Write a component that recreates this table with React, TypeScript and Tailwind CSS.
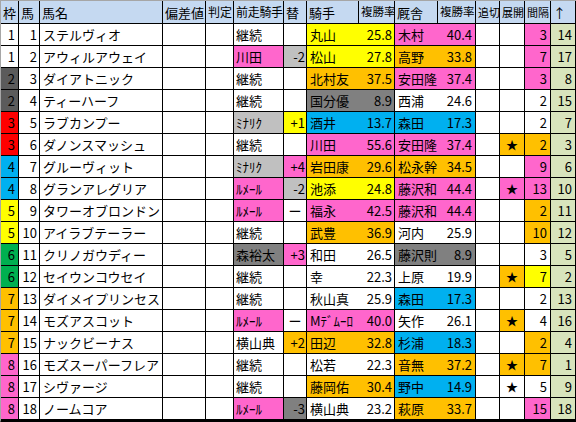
import React from "react";

const COLS =
  "grid grid-cols-[18px_21px_123px_43px_28px_50px_23px_52px_36px_43px_38px_24px_25px_26px_25px]";

const BG: Record<string, string> = {
  w: "bg-white",
  p: "bg-[#ff66cc]",
  o: "bg-[#ffc000]",
  y: "bg-[#ffff00]",
  b: "bg-[#00b0f0]",
  g: "bg-[#808080]",
  l: "bg-[#c0c0c0]",
};

const WAKU: Record<number, string> = {
  1: "bg-white",
  2: "bg-[#5b5b5b]",
  3: "bg-[#ff0000]",
  4: "bg-[#00b0f0]",
  5: "bg-[#ffff00]",
  6: "bg-[#00b050]",
  7: "bg-[#ffc000]",
  8: "bg-[#ff66cc]",
};

type Row = [
  number, number, string,
  string, string, string, string,
  string, string, string,
  string, string, string,
  number, string, number, string, number
];

const rows: Row[] = [
  [1, 1, "ステルヴィオ", "継続", "w", "", "w", "丸山", "25.8", "y", "木村", "40.4", "p", 0, "w", 3, "p", 14],
  [1, 2, "アウィルアウェイ", "川田", "p", "-2", "l", "松山", "27.8", "y", "高野", "33.8", "o", 0, "w", 7, "p", 17],
  [2, 3, "ダイアトニック", "継続", "w", "", "w", "北村友", "37.5", "o", "安田隆", "37.4", "p", 0, "w", 3, "p", 8],
  [2, 4, "ティーハーフ", "継続", "w", "", "w", "国分優", "8.9", "g", "西浦", "24.6", "w", 0, "w", 2, "w", 15],
  [3, 5, "ラブカンプー", "ﾐﾅﾘｸ", "l", "+1", "y", "酒井", "13.7", "b", "森田", "17.3", "b", 0, "w", 2, "w", 7],
  [3, 6, "ダノンスマッシュ", "継続", "w", "", "w", "川田", "55.6", "p", "安田隆", "37.4", "p", 1, "o", 2, "o", 3],
  [4, 7, "グルーヴィット", "ﾐﾅﾘｸ", "l", "+4", "p", "岩田康", "29.6", "o", "松永幹", "34.5", "o", 0, "w", 9, "p", 6],
  [4, 8, "グランアレグリア", "ﾙﾒｰﾙ", "p", "-2", "l", "池添", "24.8", "y", "藤沢和", "44.4", "p", 1, "p", 13, "p", 10],
  [5, 9, "タワーオブロンドン", "ﾙﾒｰﾙ", "p", "ー", "w", "福永", "42.5", "p", "藤沢和", "44.4", "p", 0, "w", 2, "o", 11],
  [5, 10, "アイラブテーラー", "継続", "w", "", "w", "武豊", "36.9", "o", "河内", "25.9", "w", 0, "w", 10, "o", 12],
  [6, 11, "クリノガウディー", "森裕太", "g", "+3", "p", "和田", "26.5", "w", "藤沢則", "8.9", "g", 0, "w", 3, "w", 5],
  [6, 12, "セイウンコウセイ", "継続", "w", "", "w", "幸", "22.3", "w", "上原", "19.9", "w", 1, "o", 7, "y", 2],
  [7, 13, "ダイメイプリンセス", "継続", "w", "", "w", "秋山真", "25.9", "w", "森田", "17.3", "b", 0, "w", 2, "w", 13],
  [7, 14, "モズアスコット", "ﾙﾒｰﾙ", "p", "ー", "w", "Mﾃﾞﾑｰﾛ", "40.0", "p", "矢作", "26.1", "w", 1, "o", 4, "w", 16],
  [7, 15, "ナックビーナス", "横山典", "w", "+2", "o", "田辺", "32.8", "o", "杉浦", "18.3", "b", 0, "w", 2, "o", 4],
  [8, 16, "モズスーパーフレア", "継続", "w", "", "w", "松若", "22.3", "w", "音無", "37.2", "o", 1, "o", 7, "o", 1],
  [8, 17, "シヴァージ", "継続", "w", "", "w", "藤岡佑", "30.4", "o", "野中", "14.9", "b", 1, "w", 5, "w", 9],
  [8, 18, "ノームコア", "ﾙﾒｰﾙ", "p", "-3", "g", "横山典", "23.2", "w", "萩原", "33.7", "o", 0, "w", 15, "p", 18],
];

const headers: [string, string][] = [
  ["枠", ""],
  ["馬", ""],
  ["馬名", ""],
  ["偏差値", ""],
  ["判定", "text-[12px]"],
  ["前走騎手", "text-[12px] tracking-[-0.3px]"],
  ["替", ""],
  ["騎手", ""],
  ["複勝率", "text-[11.5px]"],
  ["厩舎", ""],
  ["複勝率", "text-[11.5px]"],
  ["追切", "text-[11px]"],
  ["展開", "text-[11px]"],
  ["間隔", "text-[11px]"],
  ["↑", ""],
];

const cell = "h-[22px] border-b border-black flex items-center whitespace-nowrap overflow-hidden";

export default function App() {
  return (
    <div className="w-[576px] h-[422px] bg-white font-['Noto_Sans_CJK_JP',sans-serif] text-[13px] text-black leading-none">
      <div className={`${COLS} border-l border-t border-[#a6a6a6] border-b-[3px] border-b-black w-[576px]`}>
        {headers.map(([h, extra], i) => (
          <div
            key={i}
            className={`h-[23px] bg-[#c5d9f1] border-r border-b border-black flex items-center pl-[2px] whitespace-nowrap overflow-hidden ${extra}`}
          >
            {h}
          </div>
        ))}
        {rows.map((r, i) => {
          const [waku, num, name, prev, prevC, ch, chC, jk, jr, jC, tn, tr, tC, star, starC, iv, ivC, up] = r;
          return (
            <React.Fragment key={i}>
              <div className={`${cell} border-r justify-end pr-[3px] ${WAKU[waku]}`}>{waku}</div>
              <div className={`${cell} border-r justify-end pr-[2px]`}>{num}</div>
              <div className={`${cell} border-r pl-[3px]`}>{name}</div>
              <div className={`${cell} border-r`} />
              <div className={`${cell} border-r`} />
              <div className={`${cell} border-r pl-[2px] ${BG[prevC]}`}>{prev}</div>
              <div className={`${cell} border-r ${ch === "ー" ? "justify-center" : "justify-end pr-[1px]"} ${BG[chC]}`}>{ch}</div>
              <div className={`${cell} pl-[3px] ${BG[jC]}`}>{jk}</div>
              <div className={`${cell} border-r justify-end pr-[2px] ${BG[jC]}`}>{jr}</div>
              <div className={`${cell} pl-[3px] ${BG[tC]}`}>{tn}</div>
              <div className={`${cell} border-r justify-end pr-[3px] ${BG[tC]}`}>{tr}</div>
              <div className={`${cell} border-r`} />
              <div className={`${cell} border-r justify-center text-[12px] ${BG[starC]}`}>{star ? "★" : ""}</div>
              <div className={`${cell} border-r justify-end pr-[3px] ${BG[ivC]}`}>{iv}</div>
              <div className={`${cell} border-r justify-end pr-[3px] bg-[#d8e4bc]`}>{up}</div>
            </React.Fragment>
          );
        })}
      </div>
    </div>
  );
}
